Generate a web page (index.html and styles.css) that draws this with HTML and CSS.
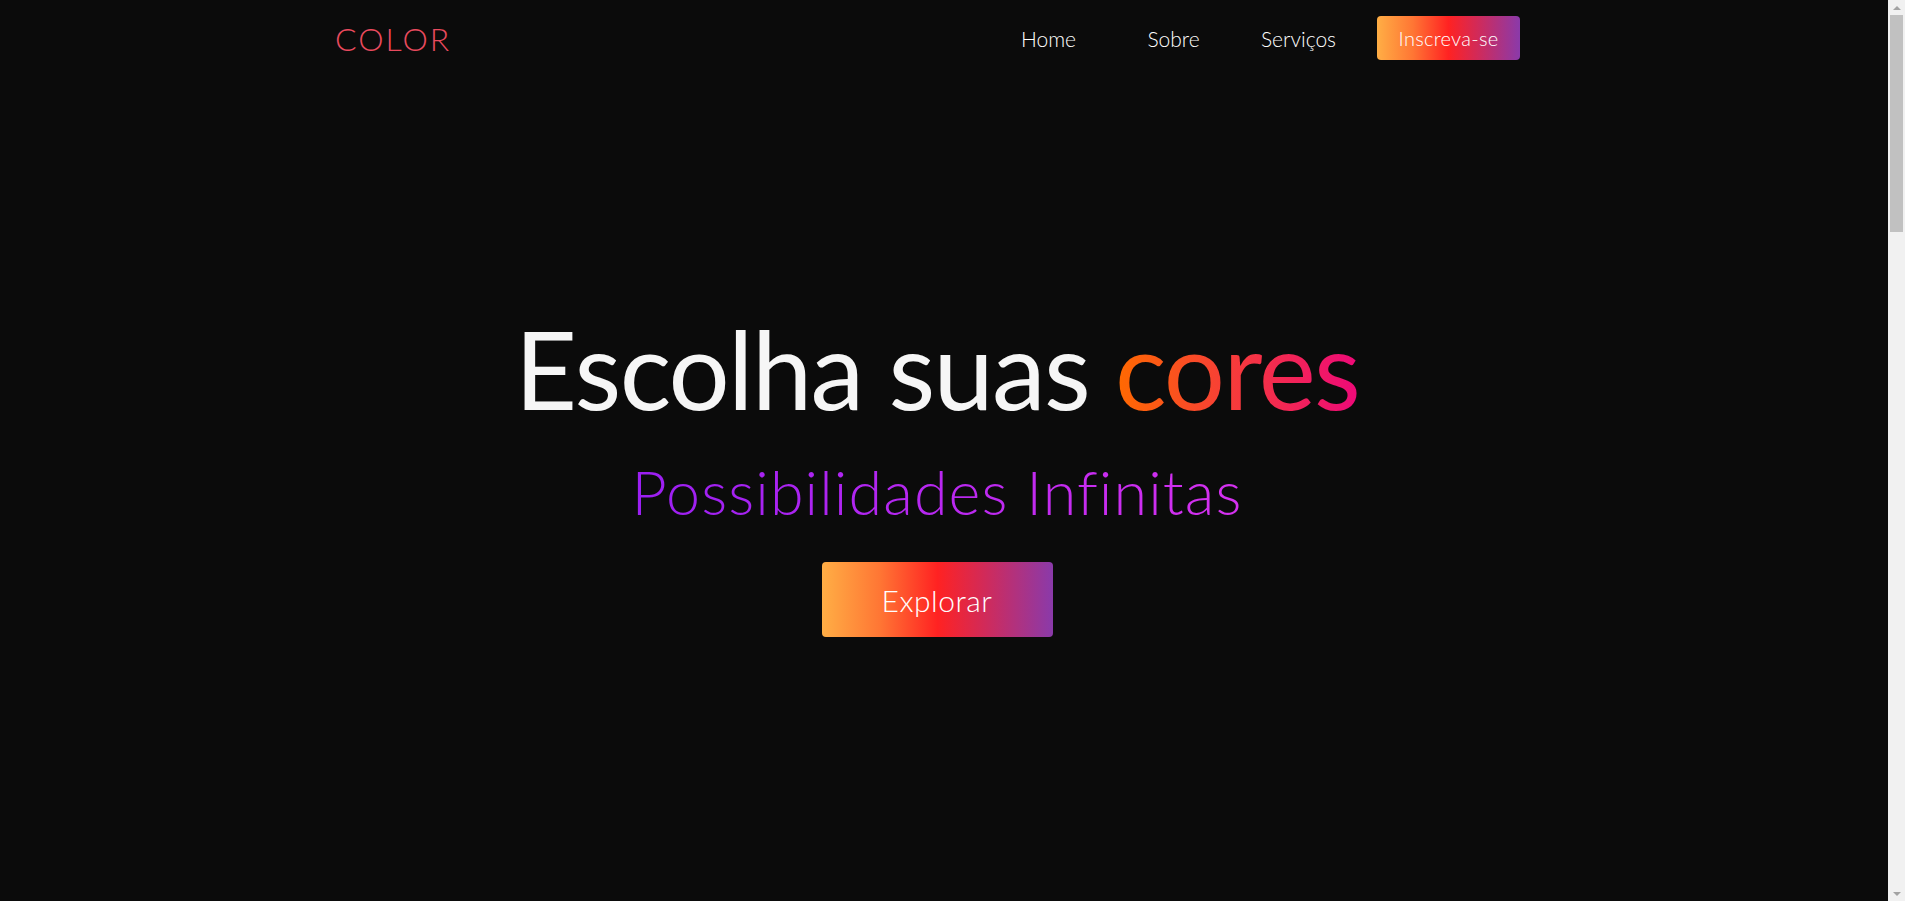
FILE: index.html
```html
<!DOCTYPE html>
<html lang="pt-BR">
<head>
<meta charset="utf-8">
<title>COLOR</title>
<link rel="stylesheet" href="styles.css">
</head>
<body>
<header class="header">
  <a class="logo" href="#">COLOR</a>
  <nav class="nav">
    <ul class="nav-list">
      <li class="nav-item"><a class="nav-link" href="#">Home</a></li>
      <li class="nav-item"><a class="nav-link" href="#">Sobre</a></li>
      <li class="nav-item"><a class="nav-link" href="#">Serviços</a></li>
    </ul>
    <a class="btn btn-small" href="#">Inscreva-se</a>
  </nav>
</header>
<main>
  <section class="hero">
    <h1 class="hero-title">Escolha suas <span class="grad-text">cores</span></h1>
    <p class="hero-sub">Possibilidades Infinitas</p>
    <a class="btn btn-large" href="#">Explorar</a>
  </section>
  <section class="section"></section>
  <section class="section"></section>
  <section class="section"></section>
</main>
<div class="fake-scrollbar" aria-hidden="true">
  <span class="sb-arrow sb-up"></span>
  <span class="sb-thumb"></span>
  <span class="sb-arrow sb-down"></span>
</div>
</body>
</html>
```
FILE: styles.css
```css
* { box-sizing: border-box; }
html, body { margin: 0; padding: 0; }
html { padding-right: 17px; background: #0b0b0b; }
body {
  background: #0b0b0b;
  color: #f5f5f5;
  font-family: "Lato", "Open Sans", sans-serif;
}
a { text-decoration: none; color: inherit; }

.fake-scrollbar {
  position: fixed;
  top: 0;
  right: 0;
  width: 17px;
  height: 100vh;
  background: #f1f1f1;
  display: flex;
  flex-direction: column;
}
.sb-arrow {
  height: 15px;
  flex: none;
  display: flex;
  justify-content: center;
  align-items: center;
}
.sb-arrow::before {
  content: "";
  width: 0;
  height: 0;
  border-left: 4px solid transparent;
  border-right: 4px solid transparent;
}
.sb-up::before { border-bottom: 4px solid #a3a3a3; }
.sb-down::before { border-top: 4px solid #a3a3a3; }
.sb-thumb {
  height: 217px;
  margin: 0 2px;
  background: #c1c1c1;
  flex: none;
}
.sb-down { margin-top: auto; }

.header {
  height: 76px;
  display: flex;
  align-items: center;
  justify-content: space-between;
  padding: 0 368px 0 335px;
}
.logo {
  font-size: 32px;
  font-weight: 300;
  color: #e94a5e;
  letter-spacing: 2px;
}
.nav {
  display: flex;
  align-items: center;
}
.nav-list {
  list-style: none;
  display: flex;
  margin: 0;
  padding: 0;
}
.nav-item {
  width: 125px;
  text-align: center;
}
.nav-link {
  font-size: 21px;
  font-weight: 300;
  color: #fff;
}
.btn {
  display: inline-flex;
  align-items: center;
  justify-content: center;
  color: #fff;
  border-radius: 4px;
  background: linear-gradient(90deg, #ffae45 0%, #ff7634 25%, #ff2222 50%, #d22a58 70%, #8a3aaa 100%);
}
.btn-small {
  margin-left: 16px;
  width: 143px;
  height: 44px;
  font-size: 20px;
  font-weight: 300;
  letter-spacing: 0.3px;
}
.hero {
  height: 825px;
  display: flex;
  flex-direction: column;
  align-items: center;
  padding: 238px 14px 0 0;
}
.hero-title {
  margin: 0;
  font-size: 108px;
  line-height: 1;
  font-weight: 400;
  letter-spacing: -1.7px;
  color: #f6f6f6;
}
.grad-text {
  background: linear-gradient(90deg, #ff6a00, #ee0979);
  -webkit-background-clip: text;
  background-clip: text;
  color: transparent;
}
.hero-sub {
  margin: 39px 0 0;
  font-size: 61px;
  line-height: 1;
  font-weight: 300;
  letter-spacing: 1.1px;
  background: linear-gradient(90deg, #9b1ff2, #d631f0);
  -webkit-background-clip: text;
  background-clip: text;
  color: transparent;
}
.btn-large {
  margin-top: 40px;
  width: 231px;
  height: 75px;
  font-size: 30px;
  font-weight: 300;
  letter-spacing: 0.5px;
}
.section {
  height: 901px;
}
```
